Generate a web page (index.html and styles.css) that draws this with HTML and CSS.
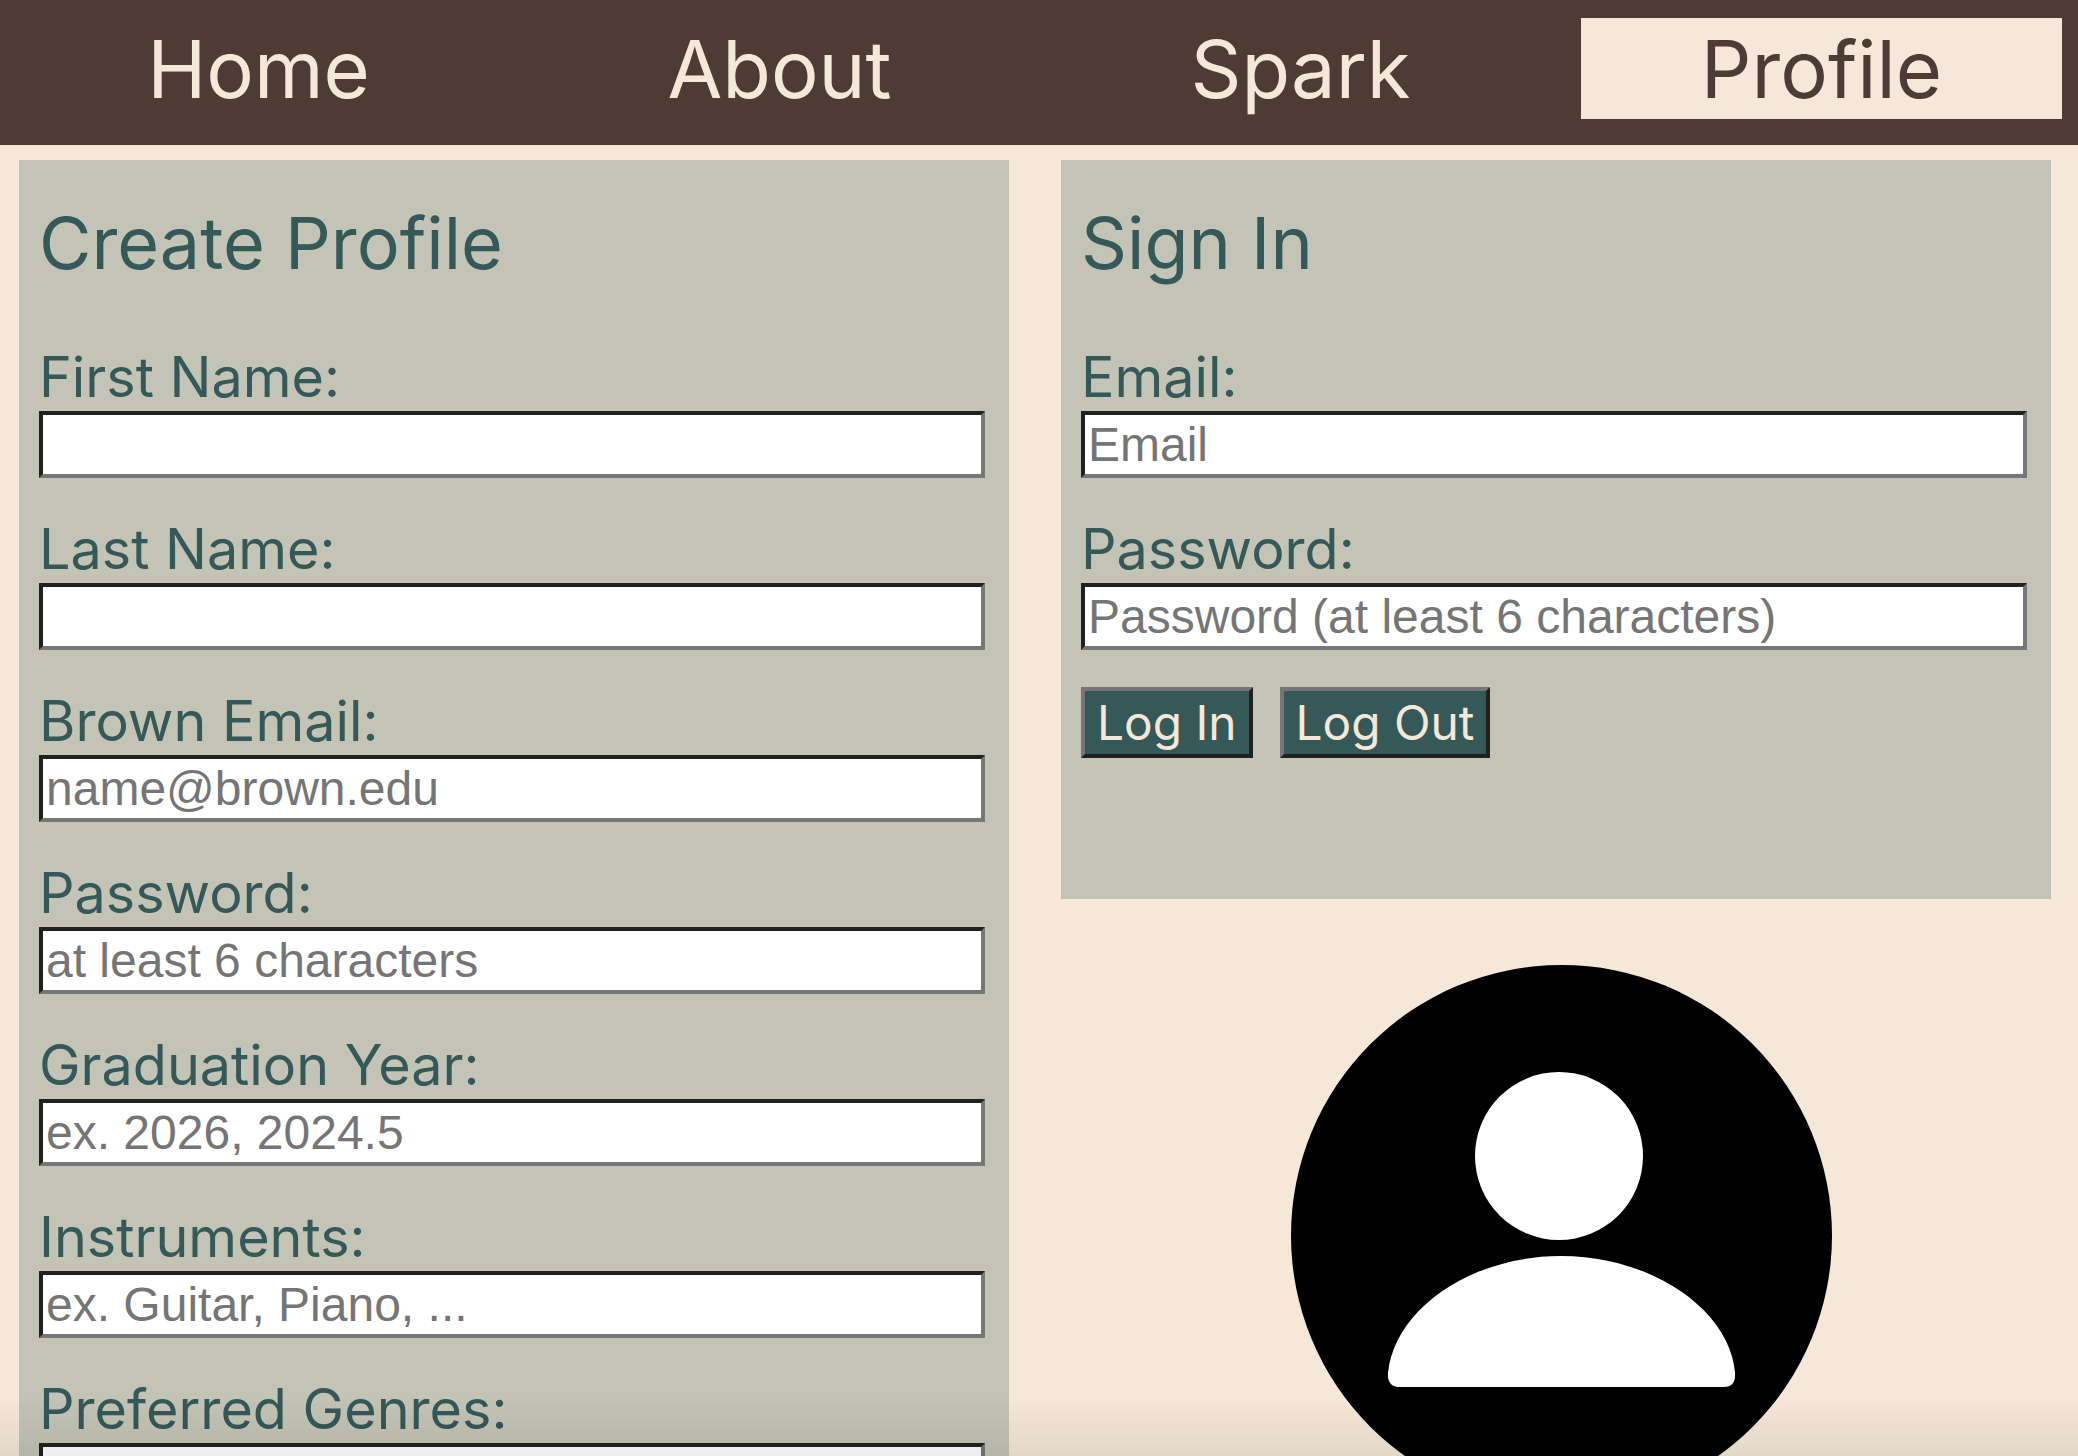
FILE: index.html
```html
<!DOCTYPE html>
<html>
<head>
  <title>Profile</title>
  <meta name="viewport" content="width=device-width, initial-scale=1">
  <link rel="stylesheet" href="styles.css">
</head>
<body>
  <nav class="nav">
    <a class="nav-item">Home</a>
    <a class="nav-item">About</a>
    <a class="nav-item">Spark</a>
    <a class="nav-item active">Profile</a>
  </nav>

  <main class="columns">
    <section class="panel create-panel">
      <h2>Create Profile</h2>
      <form>
        <div class="field">
          <label for="firstName">First Name:</label>
          <input type="text" id="firstName">
        </div>
        <div class="field">
          <label for="lastName">Last Name:</label>
          <input type="text" id="lastName">
        </div>
        <div class="field">
          <label for="brownEmail">Brown Email:</label>
          <input type="text" id="brownEmail" placeholder="name@brown.edu">
        </div>
        <div class="field">
          <label for="newPassword">Password:</label>
          <input type="text" id="newPassword" placeholder="at least 6 characters">
        </div>
        <div class="field">
          <label for="gradYear">Graduation Year:</label>
          <input type="text" id="gradYear" placeholder="ex. 2026, 2024.5">
        </div>
        <div class="field">
          <label for="instruments">Instruments:</label>
          <input type="text" id="instruments" placeholder="ex. Guitar, Piano, ...">
        </div>
        <div class="field">
          <label for="genres">Preferred Genres:</label>
          <input type="text" id="genres">
        </div>
      </form>
    </section>

    <div class="side">
      <section class="panel signin-panel">
        <h2>Sign In</h2>
        <form>
          <div class="field">
            <label for="email">Email:</label>
            <input type="text" id="email" placeholder="Email">
          </div>
          <div class="field">
            <label for="password">Password:</label>
            <input type="text" id="password" placeholder="Password (at least 6 characters)">
          </div>
          <div class="buttons">
            <button type="button">Log In</button>
            <button type="button">Log Out</button>
          </div>
        </form>
      </section>

      <svg class="avatar" viewBox="0 0 541 541" aria-label="Profile picture">
        <circle cx="270.5" cy="270.5" r="270.5" fill="#000"/>
        <circle cx="268" cy="191" r="84" fill="#fff"/>
        <path d="M97 408C103 345 179 291 270 291C361 291 439 345 444 408Q445 422 433 422L109 422Q96 422 97 408Z" fill="#fff"/>
      </svg>
    </div>
  </main>

  <div class="bottom-fade"></div>
</body>
</html>
```

FILE: styles.css
```css
:root {
  --brown: #4e3b36;
  --cream: #f5e8d8;
  --sage: #c3c4b5;
  --teal: #355858;
  --font-family: 'Inter', sans-serif;
}

html, body {
  height: 100%;
  overflow: hidden;
}

body {
  margin: 0;
  background-color: var(--cream);
  color: var(--teal);
  font-family: var(--font-family);
}

.nav {
  display: grid;
  grid-template-columns: repeat(4, 481px);
  grid-template-rows: 101px;
  gap: 40px;
  height: 145px;
  box-sizing: border-box;
  padding: 18px 0 26px 18px;
  background-color: var(--brown);
}

.nav-item {
  font-size: 79.5px;
  line-height: 103px;
  text-align: center;
  color: var(--cream);
}

.nav-item.active {
  background-color: var(--cream);
  color: var(--brown);
}

.columns {
  display: grid;
  grid-template-columns: 990px 990px;
  gap: 52px;
  padding: 15px 0 0 19px;
}

.panel {
  box-sizing: border-box;
  padding: 0 20px;
  background-color: var(--sage);
}

.create-panel {
  height: 1400px;
}

.signin-panel {
  height: 739px;
}

h2 {
  height: 72px;
  margin: 0;
  padding: 47px 0 73px;
  font-size: 71.8px;
  font-weight: 400;
  line-height: 72px;
}

.field {
  height: 172px;
}

label {
  display: block;
  height: 59px;
  font-size: 55.7px;
  line-height: 49px;
}

input {
  display: block;
  box-sizing: border-box;
  width: 946px;
  height: 67px;
  padding: 0 3px;
  border: 4px solid;
  border-color: #212121 #767676 #767676 #212121;
  background: #fff;
  font-family: 'Liberation Sans', sans-serif;
  font-size: 48px;
}

input::placeholder {
  color: #757575;
  opacity: 1;
}

.buttons {
  display: flex;
  gap: 27px;
  margin-top: -9px;
}

button {
  box-sizing: border-box;
  height: 71px;
  padding: 0 12px;
  border: 4px solid;
  border-color: #767676 #212121 #212121 #767676;
  background-color: var(--teal);
  color: var(--cream);
  font-family: var(--font-family);
  font-size: 47.8px;
}

.avatar {
  display: block;
  width: 541px;
  height: 541px;
  margin: 66px 0 0 230px;
  filter: blur(0.6px);
}

.bottom-fade {
  position: fixed;
  left: 0;
  right: 0;
  bottom: 0;
  height: 60px;
  background: linear-gradient(rgba(0, 0, 0, 0), rgba(0, 0, 0, 0.07));
  pointer-events: none;
}
```
